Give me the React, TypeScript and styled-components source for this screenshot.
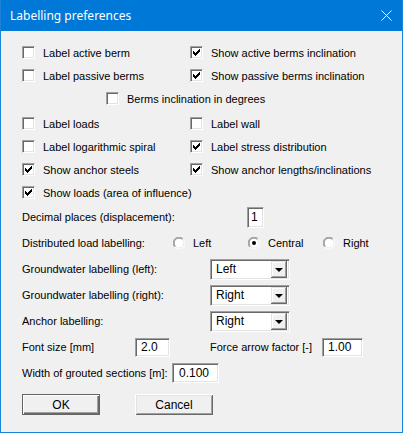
import React from "react";
import styled, { createGlobalStyle } from "styled-components";

const GlobalStyle = createGlobalStyle`
  html, body {
    margin: 0;
    padding: 0;
    background: #ffffff;
  }
`;

const Window = styled.div`
  width: 403px;
  height: 433px;
  box-sizing: border-box;
  border: 1px solid #1883d7;
  border-top: none;
  background: #f0f0f0;
  display: flex;
  flex-direction: column;
  font-family: "Liberation Sans", Arial, sans-serif;
  font-size: 11px;
  color: #000;
`;

const TitleBar = styled.div`
  height: 31px;
  flex: none;
  background: #0078d7;
  display: flex;
  align-items: center;
  justify-content: space-between;
  padding: 0 10px 0 9px;
`;

const Title = styled.span`
  font-family: "Noto Sans", "Open Sans", sans-serif;
  font-size: 12px;
  color: #fff;
  line-height: 1;
`;

const CloseIcon = styled.svg`
  display: block;
  width: 11px;
  height: 11px;
`;

const Body = styled.div`
  padding: 10px 0 0 21px;
  display: flex;
  flex-direction: column;
`;

const CheckRow = styled.div<{ $indent?: number; $gapTop?: number }>`
  display: grid;
  grid-template-columns: 168px auto;
  height: 23px;
  align-items: center;
  padding-left: ${(p) => p.$indent ?? 0}px;
  margin-top: ${(p) => p.$gapTop ?? 0}px;
`;

const CheckItem = styled.label`
  display: flex;
  align-items: center;
  white-space: nowrap;
`;

const Box = styled.span`
  width: 13px;
  height: 13px;
  box-sizing: border-box;
  flex: none;
  margin-right: 8px;
  background: #fff;
  border: 1px solid;
  border-color: #a0a0a0 #ffffff #ffffff #a0a0a0;
  box-shadow: inset 1px 1px #696969, inset -1px -1px #e3e3e3;
  display: flex;
  align-items: center;
  justify-content: center;
`;

const Tick = styled.svg`
  display: block;
  width: 7px;
  height: 7px;
`;

const FormRow = styled.div`
  display: flex;
  align-items: center;
  height: 26px;
  white-space: nowrap;
`;

const FieldLabel = styled.span<{ $width: number }>`
  width: ${(p) => p.$width}px;
  flex: none;
`;

const sunken = `
  box-sizing: border-box;
  background: #fff;
  border: 1px solid;
  border-color: #a0a0a0 #ffffff #ffffff #a0a0a0;
  box-shadow: inset 1px 1px #696969, inset -1px -1px #e3e3e3;
`;

const TextBox = styled.div<{ $width: number; $height: number; $pad?: number }>`
  ${sunken}
  width: ${(p) => p.$width}px;
  height: ${(p) => p.$height}px;
  padding-left: ${(p) => p.$pad ?? 5}px;
  display: flex;
  align-items: center;
  font-size: 12px;
  flex: none;
`;

const RadioOption = styled.label`
  width: 75px;
  display: flex;
  align-items: center;
  flex: none;
`;

const RadioMark = styled.svg`
  display: block;
  width: 12px;
  height: 12px;
  margin-right: 8px;
  flex: none;
`;

const Select = styled.div`
  ${sunken}
  width: 80px;
  height: 21px;
  padding: 2px 2px 2px 5px;
  display: flex;
  align-items: center;
  justify-content: space-between;
  font-size: 12px;
  flex: none;
`;

const DropButton = styled.span`
  width: 16px;
  height: 17px;
  box-sizing: border-box;
  background: #f0f0f0;
  box-shadow: inset -1px -1px #696969, inset 1px 1px #e3e3e3,
    inset -2px -2px #a0a0a0, inset 2px 2px #ffffff;
  display: flex;
  align-items: center;
  justify-content: center;
  &::after {
    content: "";
    width: 0;
    height: 0;
    border-left: 4px solid transparent;
    border-right: 4px solid transparent;
    border-top: 4px solid #000;
    margin-top: 1px;
  }
`;

const Spacer = styled.span<{ $width: number }>`
  width: ${(p) => p.$width}px;
  flex: none;
`;

const ButtonRow = styled.div`
  display: flex;
  gap: 35px;
  margin-top: 8px;
`;

const Button = styled.button<{ $default?: boolean }>`
  width: 78px;
  height: 21px;
  box-sizing: border-box;
  padding: 0;
  font-family: "Liberation Sans", Arial, sans-serif;
  font-size: 12px;
  color: #000;
  background: #f0f0f0;
  border: ${(p) => (p.$default ? "1px solid #646464" : "none")};
  box-shadow: ${(p) =>
    p.$default
      ? "inset 1px 1px #ffffff, inset -1px -1px #696969, inset -2px -2px #a0a0a0"
      : "inset 1px 1px #ffffff, inset -1px -1px #696969, inset 2px 2px #e3e3e3, inset -2px -2px #a0a0a0"};
`;

const Check: React.FC<{ checked?: boolean; label: string }> = ({ checked, label }) => (
  <CheckItem>
    <Box>
      {checked && (
        <Tick viewBox="0 0 7 7" shapeRendering="crispEdges">
          <path
            d="M0 2h1v3h-1zM1 3h1v3h-1zM2 4h1v3h-1zM3 3h1v3h-1zM4 2h1v3h-1zM5 1h1v3h-1zM6 0h1v3h-1z"
            fill="#000"
          />
        </Tick>
      )}
    </Box>
    {label}
  </CheckItem>
);

const Radio: React.FC<{ checked?: boolean; label: string }> = ({ checked, label }) => (
  <RadioOption>
    <RadioMark viewBox="0 0 12 12">
      <circle cx="6" cy="6" r="5.5" fill="#fff" />
      <path d="M1.8 10.2A5.5 5.5 0 0 1 10.2 1.8" stroke="#a0a0a0" fill="none" />
      <path d="M10.2 1.8A5.5 5.5 0 0 1 1.8 10.2" stroke="#ffffff" fill="none" />
      <path d="M2.5 9.5A4.5 4.5 0 0 1 9.5 2.5" stroke="#696969" fill="none" strokeWidth="0.8" />
      <path d="M9.5 2.5A4.5 4.5 0 0 1 2.5 9.5" stroke="#e3e3e3" fill="none" strokeWidth="0.8" />
      {checked && <circle cx="6" cy="6" r="2" fill="#000" />}
    </RadioMark>
    {label}
  </RadioOption>
);

const Dropdown: React.FC<{ value: string }> = ({ value }) => (
  <Select>
    {value}
    <DropButton />
  </Select>
);

export default function App() {
  return (
    <>
      <GlobalStyle />
      <Window>
        <TitleBar>
          <Title>Labelling preferences</Title>
          <CloseIcon viewBox="0 0 11 11">
            <path d="M0.5 0.5L10.5 10.5M10.5 0.5L0.5 10.5" stroke="#fff" strokeWidth="1" />
          </CloseIcon>
        </TitleBar>
        <Body>
          <CheckRow>
            <Check label="Label active berm" />
            <Check checked label="Show active berms inclination" />
          </CheckRow>
          <CheckRow>
            <Check label="Label passive berms" />
            <Check checked label="Show passive berms inclination" />
          </CheckRow>
          <CheckRow $indent={84}>
            <Check label="Berms inclination in degrees" />
          </CheckRow>
          <CheckRow $gapTop={2}>
            <Check label="Label loads" />
            <Check label="Label wall" />
          </CheckRow>
          <CheckRow>
            <Check label="Label logarithmic spiral" />
            <Check checked label="Label stress distribution" />
          </CheckRow>
          <CheckRow>
            <Check checked label="Show anchor steels" />
            <Check checked label="Show anchor lengths/inclinations" />
          </CheckRow>
          <CheckRow>
            <Check checked label="Show loads (area of influence)" />
          </CheckRow>

          <FormRow>
            <FieldLabel $width={225}>Decimal places (displacement):</FieldLabel>
            <TextBox $width={17} $height={21} $pad={3}>1</TextBox>
          </FormRow>
          <FormRow>
            <FieldLabel $width={151}>Distributed load labelling:</FieldLabel>
            <Radio label="Left" />
            <Radio checked label="Central" />
            <Radio label="Right" />
          </FormRow>
          <FormRow>
            <FieldLabel $width={188}>Groundwater labelling (left):</FieldLabel>
            <Dropdown value="Left" />
          </FormRow>
          <FormRow>
            <FieldLabel $width={188}>Groundwater labelling (right):</FieldLabel>
            <Dropdown value="Right" />
          </FormRow>
          <FormRow>
            <FieldLabel $width={188}>Anchor labelling:</FieldLabel>
            <Dropdown value="Right" />
          </FormRow>
          <FormRow>
            <FieldLabel $width={113}>Font size [mm]</FieldLabel>
            <TextBox $width={35} $height={19}>2.0</TextBox>
            <Spacer $width={40} />
            <FieldLabel $width={112}>Force arrow factor [-]</FieldLabel>
            <TextBox $width={41} $height={19}>1.00</TextBox>
          </FormRow>
          <FormRow>
            <FieldLabel $width={150}>Width of grouted sections [m]:</FieldLabel>
            <TextBox $width={47} $height={20} $pad={6}>0.100</TextBox>
          </FormRow>

          <ButtonRow>
            <Button $default>OK</Button>
            <Button>Cancel</Button>
          </ButtonRow>
        </Body>
      </Window>
    </>
  );
}
